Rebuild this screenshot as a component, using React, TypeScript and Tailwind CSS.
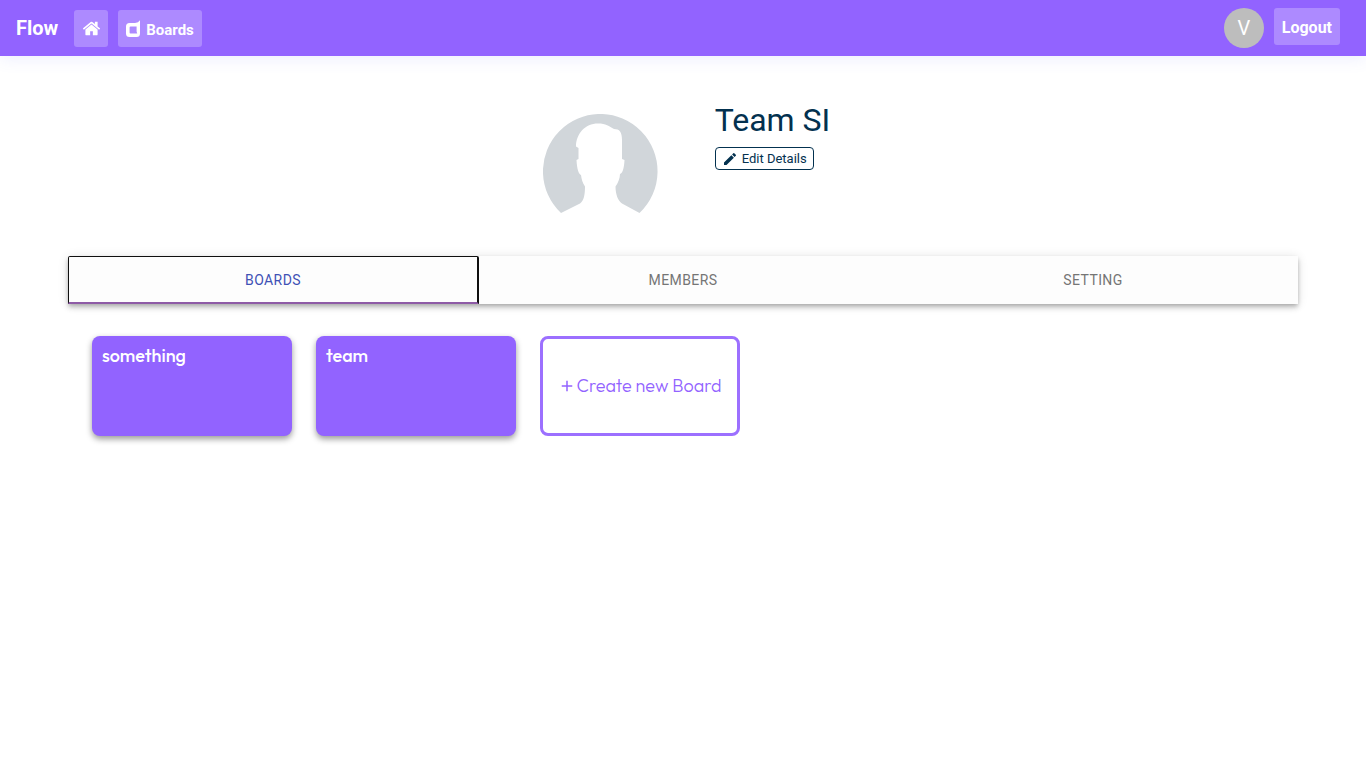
import { MdEdit, MdAdd } from "react-icons/md";

const tabs = ["Boards", "Members", "Setting"];
const boards = ["something", "team"];

function HomeIcon() {
  return (
    <svg viewBox="0 0 1792 1792" className="size-[19px]" fill="currentColor" aria-hidden="true">
      <path d="M1472 992v480q0 26-19 45t-45 19h-384v-384h-256v384h-384q-26 0-45-19t-19-45v-480q0-1 .5-3t.5-3l575-474 575 474q1 2 1 6zm223-69l-62 74q-8 9-21 11h-3q-13 0-21-7l-692-577-692 577q-12 8-24 7-13-2-21-11l-62-74q-8-10-7-23.500t11-21.500l719-599q32-26 76-26t76 26l244 204v-195q0-14 9-23t23-9h192q14 0 23 9t9 23v408l219 182q10 8 11 21.500t-7 23.500z" />
    </svg>
  );
}

function BoardsIcon() {
  return (
    <svg viewBox="0 0 16 18" className="h-[18px] w-4" fill="currentColor" fillRule="evenodd" aria-hidden="true">
      <path d="M14 0.300V13.500Q14 17 10.500 17H3.500Q0 17 0 13.500V6.500Q0 3 3.500 3H9Q12.500 2.800 14 0.300ZM4.500 6.500Q3.600 6.500 3.600 7.400V12.600Q3.600 13.500 4.500 13.500H11.200L10.600 11.500V6.500Z" />
    </svg>
  );
}

function TeamAvatar() {
  return (
    <svg viewBox="0 0 115 100" className="h-[100px] w-[115px]" aria-label="Team picture" role="img">
      <path
        fill="#d1d6da"
        d="M18 99A57.3 57.3 0 1 1 96.500 99L79 89.500C75 87 72.500 80 72.500 72.500C75 69 77 64 77 60C79.500 59 81 55 81.500 46L79 45V26C79 18 76.500 15 71 15C66 12 63 9.500 55 9.500C42 9.500 33 20 33 32.500L35.500 34V45L33.500 46C34 55 35.500 60 38 61C38.500 65 39.500 69 42 72.500C42 80 41 87 37 89.500Z"
      />
    </svg>
  );
}

export default function App() {
  return (
    <div className="min-h-screen bg-white font-[Roboto,sans-serif] text-[#172b4d]">
      <header className="flex h-14 items-start justify-between bg-[#9263ff] pl-4 pr-[26px] text-white shadow-[0_2px_16px_rgba(90,110,255,0.12)]">
        <nav className="flex items-start">
          <a href="#" className="text-xl leading-14 font-bold">Flow</a>
          <button aria-label="Home" className="mt-[10px] ml-4 flex h-[37px] w-[34px] items-center justify-center rounded-[3px] bg-white/25">
            <HomeIcon />
          </button>
          <button className="mt-[10px] ml-[10px] flex h-[37px] items-center gap-1 rounded-[3px] bg-white/25 px-2 text-[15px] font-bold">
            <BoardsIcon />
            <span className="pt-1">Boards</span>
          </button>
        </nav>
        <div className="flex items-start gap-[10px] pt-2">
          <div className="flex size-10 items-center justify-center rounded-full bg-[#bdbdbd] text-xl">V</div>
          <button className="h-[37px] rounded-[3px] bg-white/25 px-2 pt-[2px] text-base font-bold">Logout</button>
        </div>
      </header>

      <main className="px-[68px]">
        <section className="flex h-[200px] justify-center gap-[57px] pl-[7px]">
          <div className="pt-[58px]"><TeamAvatar /></div>
          <div className="pt-[45px]">
            <h1 className="text-[32px] leading-[38px] text-[#03314f]">Team SI</h1>
            <button className="mt-2 flex h-[23px] items-center gap-1 rounded-[4px] border border-[#03314f] px-[6px] text-[13px] text-[#03314f]">
              <MdEdit className="mt-px size-4" />
              Edit Details
            </button>
          </div>
        </section>

        <div role="tablist" className="grid h-12 grid-cols-3 bg-[#fdfdfd] shadow-[0_2px_4px_-1px_rgba(0,0,0,0.2),0_4px_5px_0_rgba(0,0,0,0.14),0_1px_10px_0_rgba(0,0,0,0.12)]">
          {tabs.map((tab, i) => (
            <button
              key={tab}
              role="tab"
              aria-selected={i === 0}
              className={
                i === 0
                  ? "-mr-px rounded-t-[2px] border-t border-r-2 border-b-2 border-l border-t-[#101010] border-r-[#101010] border-b-[#8e5ba6] border-l-[#101010] text-sm tracking-[0.4px] text-[#3f51b5] uppercase"
                  : "text-sm tracking-[0.4px] text-[#757575] uppercase"
              }
            >
              {tab}
            </button>
          ))}
        </div>

        <div className="flex flex-wrap gap-6 px-6 pt-8">
          {boards.map((board) => (
            <a
              key={board}
              href="#"
              className="h-[100px] w-[200px] rounded-lg bg-[#9263ff] px-[10px] py-2 font-[Outfit,Inter,sans-serif] text-lg leading-6 font-medium text-white shadow-[0_3px_6px_rgba(0,0,0,0.4)]"
            >
              {board}
            </a>
          ))}
          <button className="flex h-[100px] w-[200px] items-center justify-center rounded-lg border-3 border-[#9c70ff] pb-px font-[Outfit,Inter,sans-serif] text-lg font-light text-[#9263ff]">
            <MdAdd className="size-[18px]" />
            Create new Board
          </button>
        </div>
      </main>
    </div>
  );
}
